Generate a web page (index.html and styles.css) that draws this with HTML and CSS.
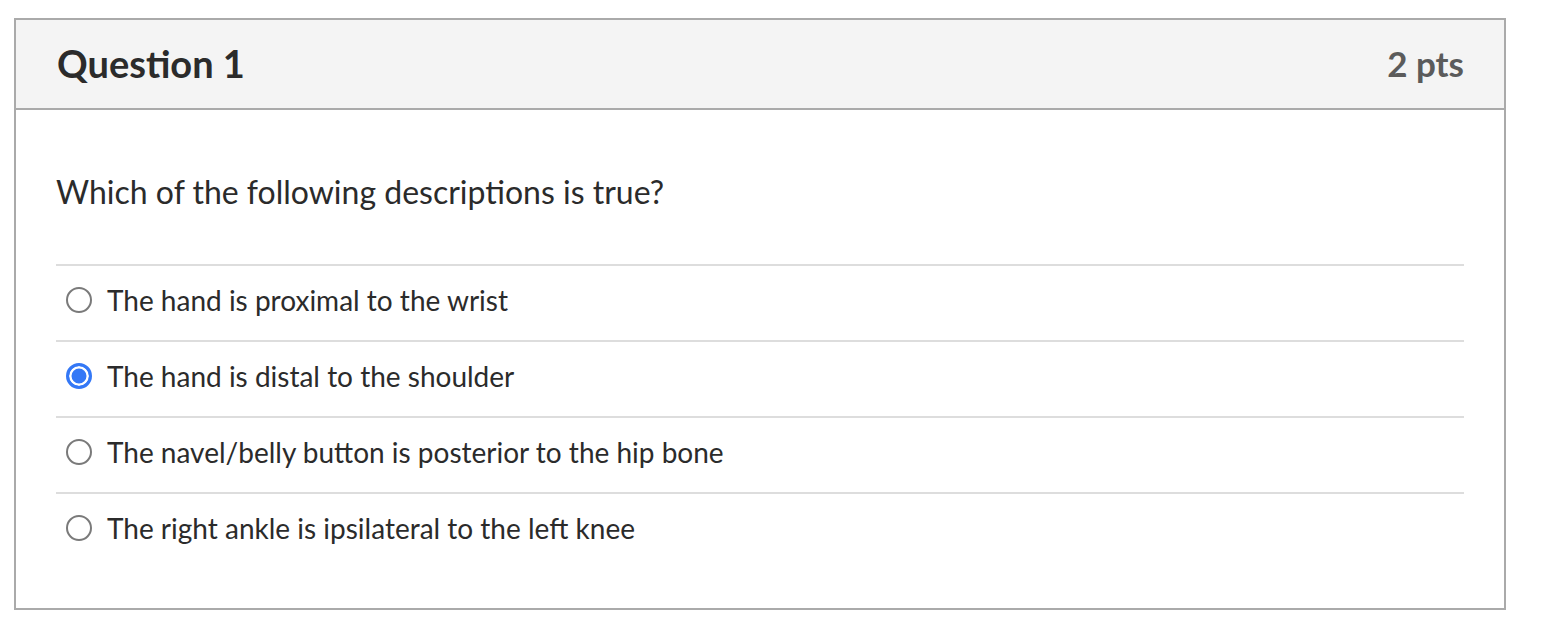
FILE: index.html
```html
<!DOCTYPE html>
<html>
<head>
<meta charset="utf-8">
<link rel="stylesheet" href="styles.css">
</head>
<body>
<div class="question">
  <div class="q-header">
    <h2 class="q-title">Question 1</h2>
    <div class="q-points">2 pts</div>
  </div>
  <div class="q-body">
    <p class="q-text">Which of the following descriptions is true?</p>
    <div class="answers">
      <label class="answer"><span class="radio"></span><span class="answer-text">The hand is proximal to the wrist</span></label>
      <label class="answer"><span class="radio checked"></span><span class="answer-text">The hand is distal to the shoulder</span></label>
      <label class="answer"><span class="radio"></span><span class="answer-text">The navel/belly button is posterior to the hip bone</span></label>
      <label class="answer"><span class="radio"></span><span class="answer-text">The right ankle is ipsilateral to the left knee</span></label>
    </div>
  </div>
</div>
</body>
</html>
```
FILE: styles.css
```css
html, body {
  margin: 0;
  padding: 0;
  background: #ffffff;
}
body {
  font-family: Lato, "Open Sans", sans-serif;
  color: #2d3b45;
  padding: 18px 0 0 14px;
}
.question {
  width: 1488px;
  border: 2px solid #aaaaaa;
  box-sizing: content-box;
}
.q-header {
  background: #f4f4f4;
  border-bottom: 2px solid #aaaaaa;
  display: flex;
  align-items: center;
  justify-content: space-between;
  padding: 0 40px 3px 41px;
  box-sizing: border-box;
  height: 90px;
}
.q-title {
  margin: 0;
  font-size: 38px;
  font-weight: 700;
  color: #2b2b2b;
  line-height: 44px;
}
.q-points {
  font-size: 35px;
  font-weight: 700;
  color: #5b5b5b;
  line-height: 44px;
}
.q-body {
  padding: 0 40px 40px;
}
.q-text {
  margin: 0;
  padding-top: 62px;
  height: 92px;
  font-size: 32px;
  line-height: 40px;
  color: #2b2b2b;
}
.answers {
  display: flex;
  flex-direction: column;
}
.answer {
  display: flex;
  align-items: center;
  height: 76px;
  box-sizing: border-box;
  border-top: 2px solid #dddddd;
  padding: 0 0 6px 10px;
}
.radio {
  width: 22px;
  height: 22px;
  border: 2px solid #7a7a7a;
  border-radius: 50%;
  box-sizing: content-box;
  flex: none;
  margin-right: 15px;
}
.radio.checked {
  width: 20px;
  height: 20px;
  border: 3px solid #3478f6;
  background: #3478f6;
  box-shadow: inset 0 0 0 2.5px #ffffff;
}
.answer-text {
  font-size: 28px;
  color: #2b2b2b;
}
```
